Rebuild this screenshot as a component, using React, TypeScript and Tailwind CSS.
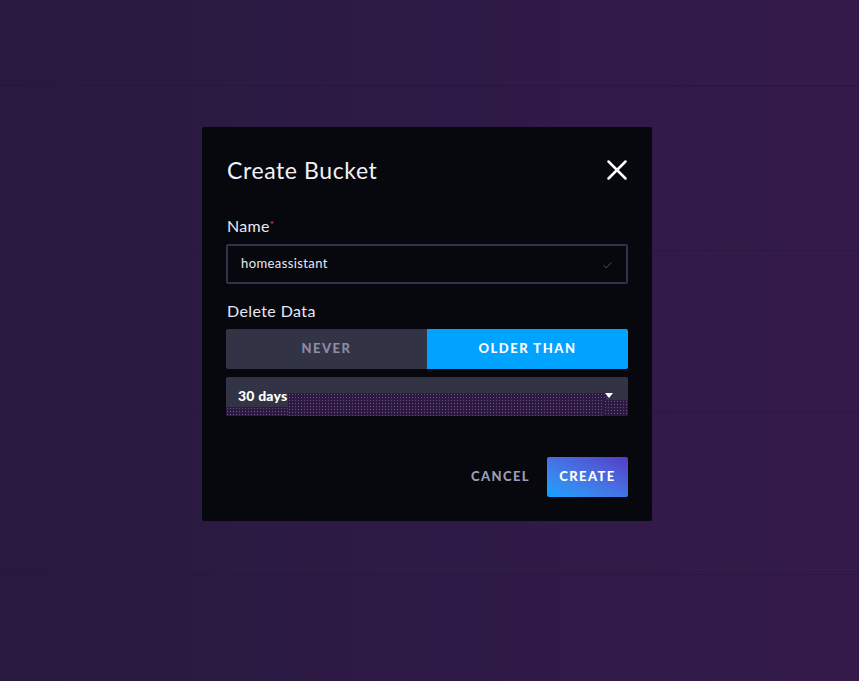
import { X, Check } from 'lucide-react'

const font = { fontFamily: 'Lato, "Noto Sans", sans-serif' }

const App = () => {
  return (
    <div
      className="relative w-full h-[681px] overflow-hidden bg-gradient-to-r from-[#271a3e] via-[#2e1a46] to-[#341a4b] flex items-start justify-center pt-[127px]"
      style={font}
    >
      {/* faint background lines */}
      <div className="absolute left-0 right-0 top-[85px] h-px bg-[#24163a] opacity-70"></div>
      <div className="absolute left-0 right-0 top-[250px] h-px bg-[#24163a] opacity-50"></div>
      <div className="absolute left-0 right-0 top-[411px] h-px bg-[#24163a] opacity-50"></div>
      <div className="absolute left-0 right-0 top-[574px] h-px bg-[#24163a] opacity-60"></div>

      {/* Modal */}
      <div className="relative w-[450px] h-[394px] bg-[#07080d] rounded-[2px] px-[24px] pt-[28px] mr-[5px]">
        {/* Header */}
        <div className="flex items-center justify-between h-[30px] pl-[1px]">
          <h2 className="text-[23px] text-[#f1f1f8] tracking-[0.6px]">Create Bucket</h2>
          <button className="text-white flex items-center justify-center -mr-[6px]">
            <X size={34} strokeWidth={1.8} className="shrink-0" />
          </button>
        </div>

        {/* Name */}
        <div className="mt-[31px] pl-[1px] text-[16px] tracking-[0.3px] text-[#e7e8f2] leading-[20px]">
          Name<span className="text-[#e0495b] text-[10px] align-top relative top-[-2px]">*</span>
        </div>
        <div className="mt-[8px] h-[40px] border-2 border-[#31324a] rounded-[2px] flex items-center justify-between px-[13px]">
          <span className="text-[13px] tracking-[0.4px] text-[#e7e8f2]">homeassistant</span>
          <Check size={11} strokeWidth={1.6} className="text-[#6e6a7c] mt-[2px]" />
        </div>

        {/* Delete Data */}
        <div className="mt-[17px] pl-[1px] text-[16px] tracking-[0.4px] text-[#e7e8f2] leading-[20px]">Delete Data</div>
        <div className="mt-[8px] flex h-[40px] rounded-[2px] overflow-hidden">
          <button className="w-1/2 bg-[#333346] text-[13px] font-black tracking-[1.5px] text-[#8a8ca6]">NEVER</button>
          <button className="w-1/2 bg-[#00a3ff] text-[13px] font-black tracking-[1.5px] text-white">OLDER THAN</button>
        </div>

        {/* Dropdown */}
        <div className="relative mt-[8px] h-[39px] bg-[#333346] rounded-[2px] overflow-hidden">
          <div className="absolute left-0 bottom-0 w-[64px] h-[9px] bg-[#2d1a44] bg-[radial-gradient(circle,#6e5270_0.6px,transparent_0.8px)] bg-[size:3px_3px]"></div>
          <div className="absolute left-[62px] right-[22px] bottom-0 h-[23px] bg-[#2d1a44] bg-[radial-gradient(circle,#6e5270_0.6px,transparent_0.8px)] bg-[size:3px_3px]"></div>
          <div className="absolute right-0 bottom-0 w-[24px] h-[16px] bg-[#2d1a44] bg-[radial-gradient(circle,#6e5270_0.6px,transparent_0.8px)] bg-[size:3px_3px]"></div>
          <div className="relative flex items-center justify-between h-full pl-[12px] pr-[15px] pb-[2px]">
            <span className="text-[14px] font-black tracking-[0.2px] text-white">30 days</span>
            <span className="w-0 h-0 border-l-[4px] border-r-[4px] border-t-[5px] border-l-transparent border-r-transparent border-t-white"></span>
          </div>
        </div>

        {/* Footer */}
        <div className="mt-[41px] flex items-center justify-end gap-[17px]">
          <button className="text-[13px] font-black tracking-[1.4px] text-[#9a9cb4]">CANCEL</button>
          <button className="w-[81px] h-[40px] rounded-[2px] bg-gradient-to-tr from-[#00a3ff] to-[#513cc6] text-[13px] font-black tracking-[1.4px] text-white">
            CREATE
          </button>
        </div>
      </div>
    </div>
  )
}

export default App
